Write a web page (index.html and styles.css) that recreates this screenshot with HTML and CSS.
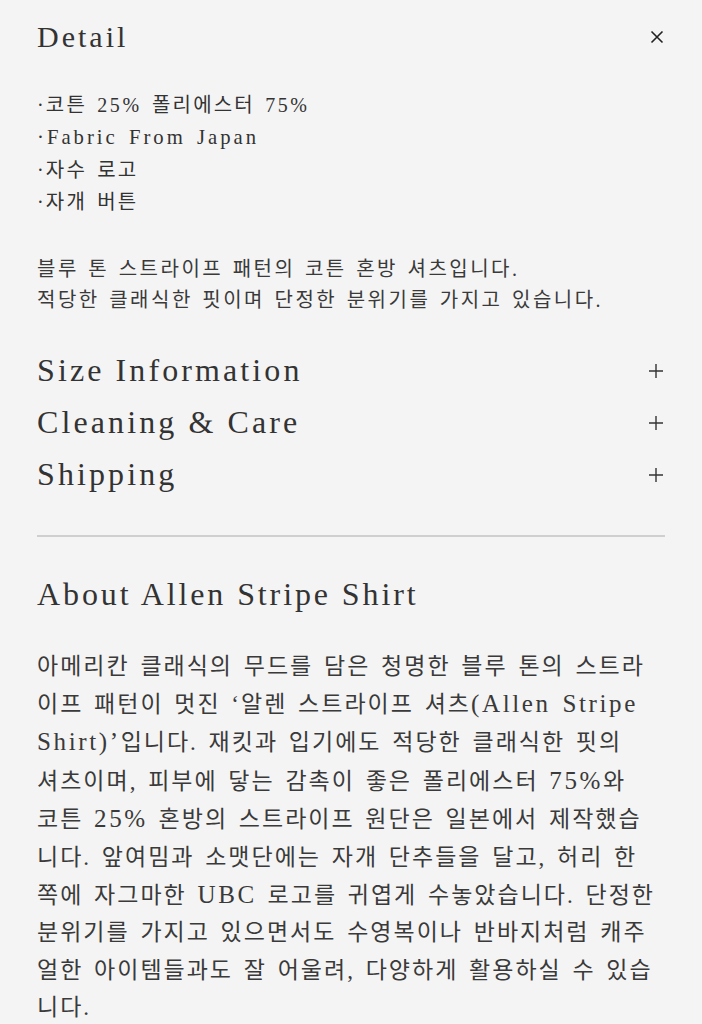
FILE: index.html
```html
<!DOCTYPE html>
<html lang="ko">

<head>
    <meta charset="UTF-8">
    <meta name="viewport" content="width=device-width, initial-scale=1.0">
    <title>Allen Stripe Shirt - Detail</title>
    <link rel="stylesheet" href="styles.css">
</head>

<body>
    <div class="panel">
        <div class="panel-head">
            <h2>Detail</h2>
            <button class="close-btn" aria-label="close">
                <svg width="14" height="14" viewBox="0 0 14 14">
                    <path d="M1.5 1.5L12.5 12.5M12.5 1.5L1.5 12.5" stroke="#222" stroke-width="1.6" fill="none" />
                </svg>
            </button>
        </div>

        <ul class="detail-list">
            <li>·코튼 <span class="en">25%</span> 폴리에스터 <span class="en">75%</span></li>
            <li class="en">·Fabric From Japan</li>
            <li>·자수 로고</li>
            <li>·자개 버튼</li>
        </ul>

        <p class="summary">블루 톤 스트라이프 패턴의 코튼 혼방 셔츠입니다.<br>적당한 클래식한 핏이며 단정한 분위기를 가지고 있습니다.</p>

        <div class="accordion">
            <div class="acc-row">
                <span>Size Information</span>
                <svg class="plus" width="16" height="16" viewBox="0 0 16 16">
                    <path d="M8 1V15M1 8H15" stroke="#333" stroke-width="1.4" fill="none" />
                </svg>
            </div>
            <div class="acc-row">
                <span>Cleaning &amp; Care</span>
                <svg class="plus" width="16" height="16" viewBox="0 0 16 16">
                    <path d="M8 1V15M1 8H15" stroke="#333" stroke-width="1.4" fill="none" />
                </svg>
            </div>
            <div class="acc-row">
                <span>Shipping</span>
                <svg class="plus" width="16" height="16" viewBox="0 0 16 16">
                    <path d="M8 1V15M1 8H15" stroke="#333" stroke-width="1.4" fill="none" />
                </svg>
            </div>
        </div>

        <hr class="divider">

        <div class="about">
            <h3>About Allen Stripe Shirt</h3>
            <!-- line breaks follow the original copy layout -->
            <p>아메리칸 클래식의 무드를 담은 청명한 블루 톤의 스트라<br>이프 패턴이 멋진 ‘알렌 스트라이프 셔츠<span class="en">(Allen Stripe</span><br><span class="en">Shirt)’</span>입니다. 재킷과 입기에도 적당한 클래식한 핏의<br>셔츠이며, 피부에 닿는 감촉이 좋은 폴리에스터 <span class="en">75%</span>와<br>코튼 <span class="en">25%</span> 혼방의 스트라이프 원단은 일본에서 제작했습<br>니다. 앞여밈과 소맷단에는 자개 단추들을 달고, 허리 한<br>쪽에 자그마한 <span class="en">UBC</span> 로고를 귀엽게 수놓았습니다. 단정한<br>분위기를 가지고 있으면서도 수영복이나 반바지처럼 캐주<br>얼한 아이템들과도 잘 어울려, 다양하게 활용하실 수 있습<br>니다.</p>
        </div>
    </div>
</body>

</html>
```

FILE: styles.css
```css
body {
    margin: 0;
    background-color: #f4f4f4;
    color: #333;
    font-family: "Liberation Serif", "Noto Sans CJK KR", serif;
}

.panel {
    padding: 17px 37px 0;
}

.panel-head {
    display: flex;
    justify-content: space-between;
    align-items: center;
}

.panel-head h2 {
    margin: 0;
    font-size: 30px;
    font-weight: normal;
    letter-spacing: 3px;
    line-height: 40px;
}

.close-btn {
    border: none;
    background: none;
    padding: 0;
    margin-right: 1px;
    cursor: pointer;
    display: flex;
}

/* latin runs are set a little larger than the hangul around them */
.en {
    font-size: 1.09em;
    letter-spacing: 2.6px;
}

.detail-list {
    list-style-type: none;
    margin: 32px 0 0;
    padding: 0;
    font-size: 20px;
    letter-spacing: 2.2px;
    word-spacing: 3px;
    line-height: 32.4px;
}

.detail-list .en {
    font-size: 1em;
}

.detail-list li.en {
    font-size: 20.7px;
    letter-spacing: 3px;
}

.summary {
    margin: 35px 0 0;
    font-size: 20px;
    letter-spacing: 2.5px;
    word-spacing: 2px;
    line-height: 31px;
    color: #3a3a3a;
}

.accordion {
    margin-top: 29px;
}

.acc-row {
    display: flex;
    justify-content: space-between;
    align-items: center;
    height: 52px;
    font-size: 32px;
    letter-spacing: 3.1px;
}

.acc-row .plus {
    margin-right: 1px;
}

.divider {
    border: none;
    border-top: 2px solid #cfcfcf;
    margin: 34px 0 0;
}

.about h3 {
    margin: 37px 0 0;
    font-size: 32px;
    font-weight: normal;
    letter-spacing: 2.9px;
    line-height: 40px;
}

.about p {
    margin: 34px 0 0;
    font-size: 23px;
    letter-spacing: 2px;
    word-spacing: 3px;
    line-height: 37.4px;
    color: #3a3a3a;
}
```
